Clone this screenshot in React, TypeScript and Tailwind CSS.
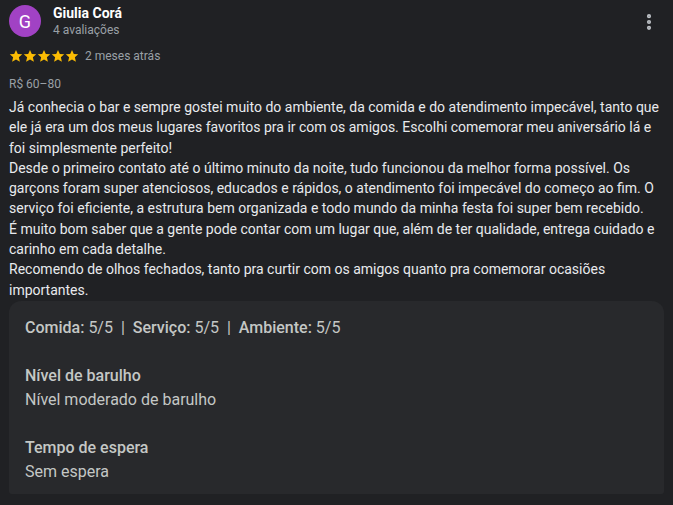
import { MoreVertical } from "lucide-react";

const body = [
  "Já conhecia o bar e sempre gostei muito do ambiente, da comida e do atendimento impecável, tanto que ele já era um dos meus lugares favoritos pra ir com os amigos. Escolhi comemorar meu aniversário lá e foi simplesmente perfeito!",
  "Desde o primeiro contato até o último minuto da noite, tudo funcionou da melhor forma possível. Os garçons foram super atenciosos, educados e rápidos, o atendimento foi impecável do começo ao fim. O serviço foi eficiente, a estrutura bem organizada e todo mundo da minha festa foi super bem recebido.",
  "É muito bom saber que a gente pode contar com um lugar que, além de ter qualidade, entrega cuidado e carinho em cada detalhe.",
  "Recomendo de olhos fechados, tanto pra curtir com os amigos quanto pra comemorar ocasiões importantes.",
];

function Star() {
  return (
    <svg viewBox="0 0 24 24" className="w-[14px] h-[14px]" fill="#fbbc04">
      <path d="M12 1.5l3.1 7 7.6.7-5.8 5 1.8 7.5L12 17.8l-6.7 3.9 1.8-7.5-5.8-5 7.6-.7z" />
    </svg>
  );
}

export default function App() {
  return (
    <div
      className="w-[673px] h-[505px] bg-[#202124] overflow-hidden text-[#e8eaed]"
      style={{ fontFamily: "Roboto, 'Noto Sans', sans-serif" }}
    >
      <div className="flex items-start pl-[9px] pr-[14px] pt-[5px]">
        <div className="w-8 h-8 rounded-full bg-[#a142c4] flex items-center justify-center text-white text-[18px]">
          G
        </div>
        <div className="ml-3 flex-1 -mt-[1px]">
          <div className="text-[14px] font-bold text-white leading-[18px]">Giulia Corá</div>
          <div className="text-[12px] text-[#9aa0a6] leading-[16px]">4 avaliações</div>
        </div>
        <MoreVertical className="w-5 h-5 mt-[7px] text-[#bdc1c6]" strokeWidth={3} />
      </div>

      <div className="flex items-center pl-[9px] mt-[10px] h-[16px]">
        <div className="flex">
          <Star />
          <Star />
          <Star />
          <Star />
          <Star />
        </div>
        <span className="ml-[6px] text-[12px] text-[#9aa0a6]">2 meses atrás</span>
      </div>

      <div className="pl-[9px] mt-[12px] text-[12px] text-[#9aa0a6] leading-[16px]">R$ 60–80</div>

      <div className="pl-[9px] pr-[9px] mt-[5px] text-[14px] leading-[20.3px] text-[#e8eaed]">
        {body.map((p, i) => (
          <p key={i}>{p}</p>
        ))}
      </div>

      <div className="mx-[9px] mt-[1px] rounded-t-xl rounded-b-[3px] bg-[#28292c] px-4 pt-[15px] pb-[10px] text-[16px] leading-[24px] text-[#c4c7c5]">
        <p>
          <span className="font-medium">Comida:</span> 5/5 &nbsp;|&nbsp;{" "}
          <span className="font-medium">Serviço:</span> 5/5 &nbsp;|&nbsp;{" "}
          <span className="font-medium">Ambiente:</span> 5/5
        </p>
        <p className="mt-6 font-medium">Nível de barulho</p>
        <p>Nível moderado de barulho</p>
        <p className="mt-6 font-medium">Tempo de espera</p>
        <p>Sem espera</p>
      </div>
    </div>
  );
}
